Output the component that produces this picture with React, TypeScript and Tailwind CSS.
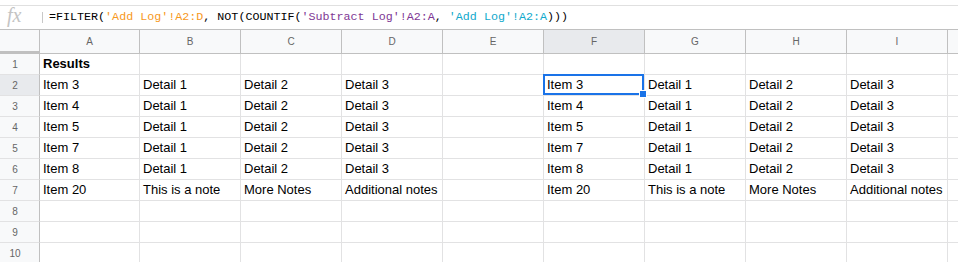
const cols = ["A", "B", "C", "D", "E", "F", "G", "H", "I"];

const detail = ["Detail 1", "Detail 2", "Detail 3"];
const notes = ["This is a note", "More Notes", "Additional notes"];

const rows: string[][] = [
  ["Results"],
  ["Item 3", ...detail, "", "Item 3", ...detail],
  ["Item 4", ...detail, "", "Item 4", ...detail],
  ["Item 5", ...detail, "", "Item 5", ...detail],
  ["Item 7", ...detail, "", "Item 7", ...detail],
  ["Item 8", ...detail, "", "Item 8", ...detail],
  ["Item 20", ...notes, "", "Item 20", ...notes],
  [],
  [],
  [],
];

const FormulaBar = () => (
  <div className="h-[25px] border-y border-t-[#e0e0e0] border-b-[#c0c0c0] flex items-center bg-white">
    <span className="w-[42px] pl-[7px] text-[20px] leading-none italic text-[#c4c4c4] font-['Liberation_Serif',serif] -mt-[5px]">
      fx
    </span>
    <span className="w-px h-[11px] bg-[#c8c8c8]" />
    <span className="ml-[6px] text-[11.7px] whitespace-nowrap text-black font-['Liberation_Mono','DejaVu_Sans_Mono',monospace]">
      =FILTER(
      <span className="text-[#f7981d]">'Add Log'!A2:D</span>, NOT(COUNTIF(
      <span className="text-[#7e3794]">'Subtract Log'!A2:A</span>,{" "}
      <span className="text-[#11a9cc]">'Add Log'!A2:A</span>)))
    </span>
  </div>
);

const App = () => {
  return (
    <div className="w-[958px] h-[262px] overflow-hidden bg-white font-['Liberation_Sans',Arial,sans-serif]">
      <div className="h-[5px]" />
      <FormulaBar />

      {/* column headers */}
      <div className="flex h-[24px] bg-[#f8f9fa] border-b border-[#c0c0c0] text-[10px] text-[#666]">
        <div className="w-[40px] shrink-0 border-r border-[#c0c0c0] -mb-px border-b-[3px] border-b-[#c0c0c0]" />
        {cols.map((c, i) => (
          <div
            key={c}
            className={`${i === 0 ? "w-[100px]" : "w-[101px]"} shrink-0 border-r border-[#c0c0c0] flex items-center justify-center ${
              c === "F" ? "bg-[#e8eaed]" : ""
            }`}
          >
            {c}
          </div>
        ))}
        <div className="flex-1" />
      </div>

      {rows.map((row, r) => (
        <div key={r} className="flex h-[21px] border-b border-[#e2e2e3]">
          <div
            className={`w-[40px] shrink-0 border-r border-[#c0c0c0] -mb-px border-b border-b-[#e2e2e3] flex items-center justify-center pr-[9px] text-[10px] text-[#666] ${
              r === 1 ? "bg-[#e8eaed]" : "bg-[#f8f9fa]"
            }`}
          >
            {r + 1}
          </div>
          {cols.map((c, i) => (
            <div
              key={c}
              className={`${i === 0 ? "w-[100px]" : "w-[101px]"} shrink-0 border-r border-[#e2e2e3] relative flex items-center pl-[3px] text-[13px] text-black whitespace-nowrap overflow-visible ${
                r === 0 ? "font-bold" : ""
              }`}
            >
              {row[i] ?? ""}
              {r === 1 && c === "F" && (
                <>
                  <div className="absolute -top-px -left-px right-0 bottom-0 border-2 border-[#1a73e8] z-10 pointer-events-none" />
                  <div className="absolute -right-[2px] -bottom-[2px] w-[6px] h-[6px] bg-[#1a73e8] outline outline-1 outline-white z-20" />
                </>
              )}
            </div>
          ))}
          <div className="flex-1" />
        </div>
      ))}
    </div>
  );
};

export default App;
